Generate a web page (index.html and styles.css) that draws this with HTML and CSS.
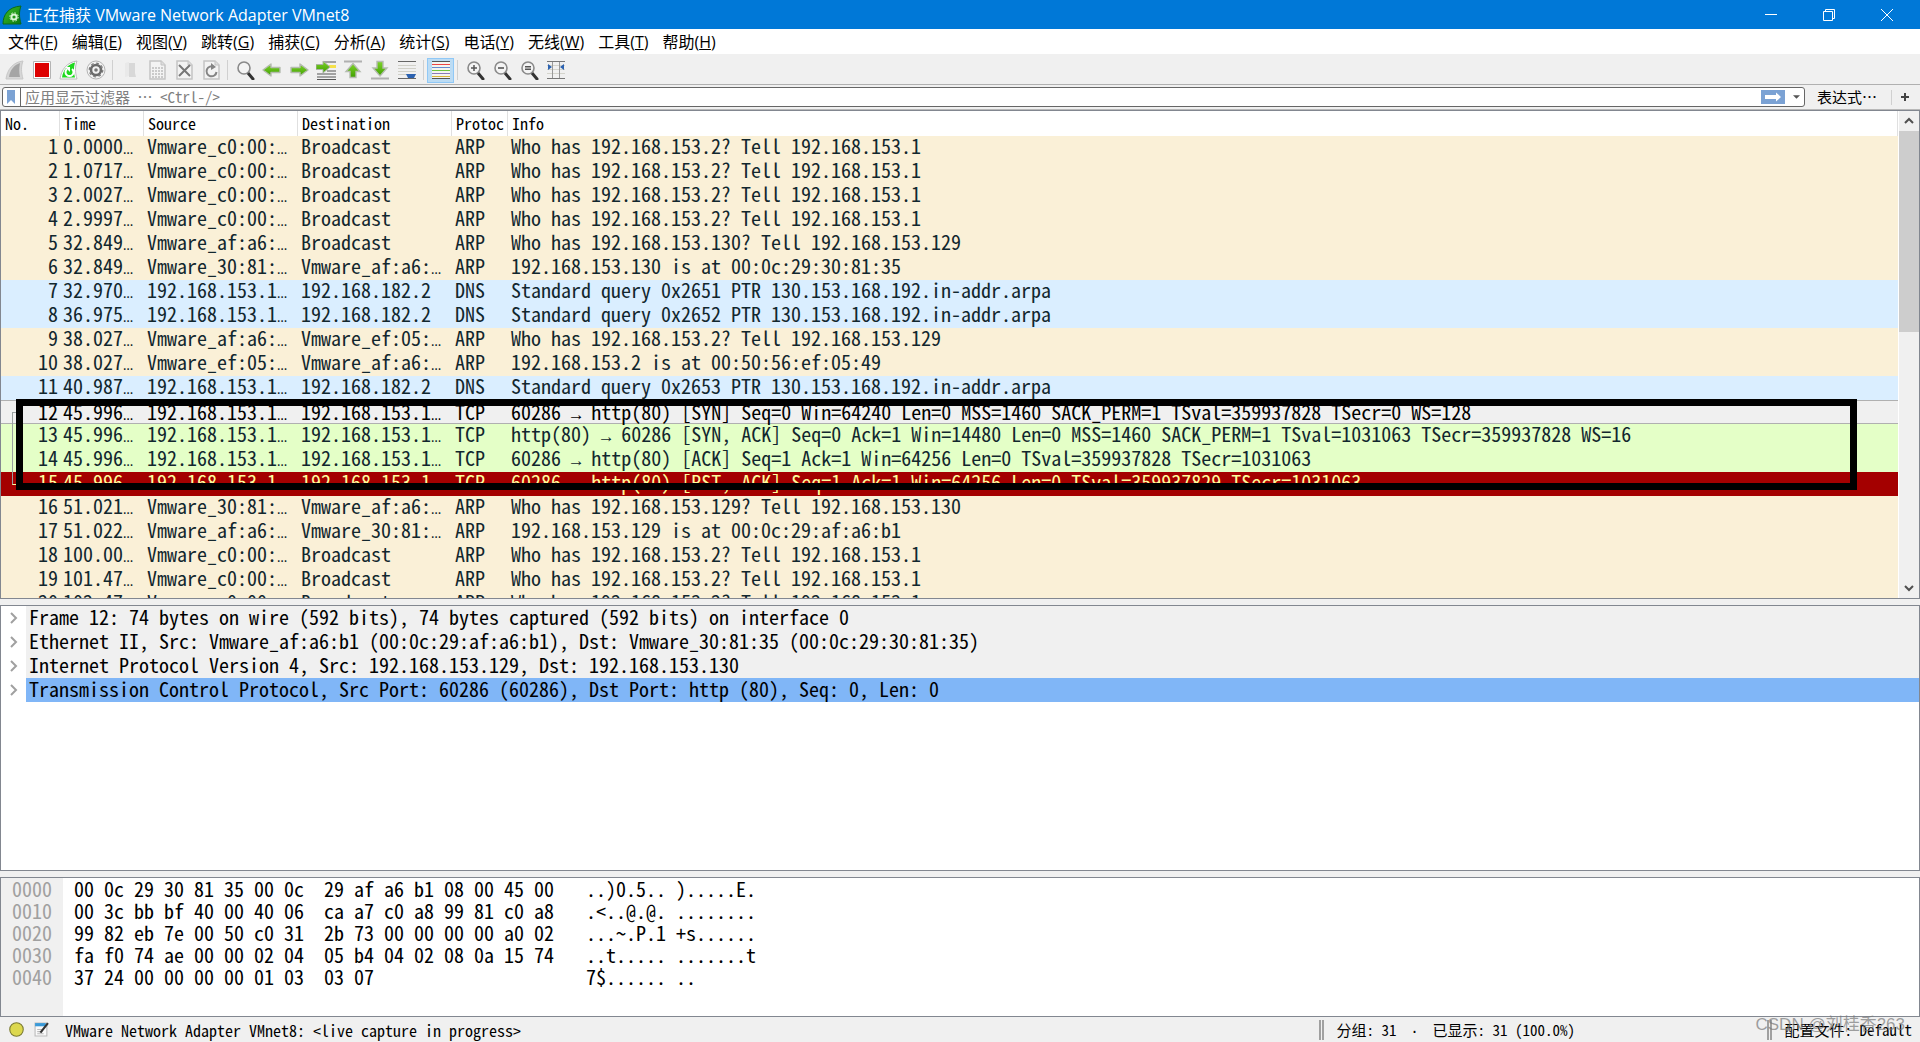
FILE: index.html
```html
<!DOCTYPE html>
<html lang="zh-CN">
<head>
<meta charset="utf-8">
<title>正在捕获 VMware Network Adapter VMnet8</title>
<link rel="stylesheet" href="styles.css">
</head>
<body>
<svg class="defs" aria-hidden="true">
  <defs>
    <linearGradient id="green" x1="0" y1="0" x2="0" y2="1"><stop offset="0" stop-color="#7fd42a"/><stop offset="1" stop-color="#3f9f00"/></linearGradient>
    <linearGradient id="fin" x1="0" y1="0" x2="1" y2="1"><stop offset="0" stop-color="#3fc02a"/><stop offset="1" stop-color="#0c7a10"/></linearGradient>
    <g id="lens"><path d="M13 13l5 6" stroke="#333" stroke-width="3" stroke-linecap="round"/><circle cx="9" cy="8" r="6" fill="#f4f4f4" stroke="#8a8a8a" stroke-width="1.6"/></g>
    <g id="page"><path d="M3 1h11l4 4v14H3z" fill="#f3f3f3" stroke="#c4c4c4" stroke-width="1.5"/><path d="M14 1v4h4" fill="#ddd" stroke="#c4c4c4"/></g>
    <path id="arrow" d="M1 10l8-6v3.500h9v5H9V16z" fill="url(#green)" stroke="#b5bcb0" stroke-width="1.400" stroke-linejoin="round"/>
  </defs>
</svg>

<header class="titlebar">
  <svg class="logo" viewBox="0 0 20 20"><path d="M1 19C1 10 6 2 19 1C17 6 17 12 19 19z" fill="url(#fin)" stroke="#0a6a1a"/><circle cx="12" cy="12" r="2.600" fill="none" stroke="#d8f5d4" stroke-width="2"/><circle cx="12" cy="12" r="4.200" fill="none" stroke="#d8f5d4" stroke-width="1" stroke-dasharray="1.600 1.700"/></svg>
  <h1>正在捕获 VMware Network Adapter VMnet8</h1>
  <div class="window-buttons">
    <button aria-label="最小化"><svg viewBox="0 0 12 12"><path d="M0 5.500h12"/></svg></button>
    <button aria-label="还原"><svg viewBox="0 0 12 12"><path d="M.5 2.500h9v9h-9zM2.500 2.500v-2h9v9h-2"/></svg></button>
    <button aria-label="关闭"><svg viewBox="0 0 12 12"><path d="M0 0l12 12M12 0L0 12"/></svg></button>
  </div>
</header>

<nav class="menubar">
  <button>文件(<u>F</u>)</button><button>编辑(<u>E</u>)</button><button>视图(<u>V</u>)</button><button>跳转(<u>G</u>)</button><button>捕获(<u>C</u>)</button><button>分析(<u>A</u>)</button><button>统计(<u>S</u>)</button><button>电话(<u>Y</u>)</button><button>无线(<u>W</u>)</button><button>工具(<u>T</u>)</button><button>帮助(<u>H</u>)</button>
</nav>

<div class="toolbar" role="toolbar">
  <button aria-label="开始捕获"><svg viewBox="0 0 20 20"><path d="M1 19C2 10 8 2 18 1C16 6 16 12 18 19z" fill="#d6d6d6" stroke="#c8c8c8"/><path d="M4 17C5 10 9 5 15 3C14 8 14 13 15 17z" fill="#a5a5a5"/></svg></button>
  <button aria-label="停止捕获"><svg viewBox="0 0 20 20"><path d="M1.500 1.500h17v17h-17z" fill="#fff" stroke="#b4b4b4"/><path d="M3 3h14v14H3z" fill="#d00"/></svg></button>
  <button aria-label="重新捕获"><svg viewBox="0 0 20 20"><path d="M1 19C2 10 8 2 18 1C16 6 16 12 18 19z" fill="#fff" stroke="#bbb"/><path d="M3 17.500C4 10 9 4 16 2.500C14.500 8 14.500 13 16 17.500z" fill="#1fd81f"/><path d="M8 9a4 4 0 1 0 5 0" fill="none" stroke="#fff" stroke-width="2"/><path d="M6 7h5v5z" fill="#fff"/></svg></button>
  <button aria-label="捕获选项"><svg viewBox="0 0 20 20"><circle cx="10" cy="10" r="9" fill="#f3f3f3" stroke="#b4b4b4"/><circle cx="10" cy="10" r="5" fill="none" stroke="#6c6c6c" stroke-width="2.600"/><circle cx="10" cy="10" r="6.800" fill="none" stroke="#777" stroke-width="1.200" stroke-dasharray="2.700 2.640"/><circle cx="10" cy="10" r="1.800" fill="#777"/></svg></button>
  <span class="sep"></span>
  <button aria-label="打开"><svg viewBox="0 0 20 20"><path d="M5 3l4-1v14l-4 1z" fill="#e9e9e9"/><path d="M9 3h6v10l1 4H9z" fill="#d8d8d8"/></svg></button>
  <button aria-label="保存"><svg viewBox="0 0 20 20"><use href="#page"/><path d="M5 8h11M5 11h11M5 14h11M5 17h11" stroke="#cacaca" stroke-width="2" stroke-dasharray="2 1"/></svg></button>
  <button aria-label="关闭文件"><svg viewBox="0 0 20 20"><use href="#page"/><path d="M5 5l11 11M16 5L5 16" stroke="#777" stroke-width="2"/></svg></button>
  <button aria-label="重新加载"><svg viewBox="0 0 20 20"><use href="#page"/><path d="M13 7a5 5 0 1 0 2.500 5" fill="none" stroke="#848484" stroke-width="2"/><path d="M10 3l5 4-5 3z" fill="#848484"/></svg></button>
  <span class="sep"></span>
  <button aria-label="查找"><svg viewBox="0 0 20 20"><use href="#lens"/></svg></button>
  <button aria-label="后退"><svg viewBox="0 0 20 20"><use href="#arrow"/></svg></button>
  <button aria-label="前进"><svg viewBox="0 0 20 20"><use href="#arrow" transform="matrix(-1 0 0 1 20 0)"/></svg></button>
  <button aria-label="转到分组"><svg viewBox="0 0 20 20"><path d="M8 2h12M1 14h19M1 17h19M1 19.500h19M11 11h9" stroke="#555" stroke-width="1.200"/><path d="M13 5h7v3h-7z" fill="#f5e04a"/><path d="M0 4.500h7V1l7 6-7 6V9.500H0z" fill="url(#green)" stroke="#aab4a4"/></svg></button>
  <button aria-label="首个分组"><svg viewBox="0 0 20 20"><path d="M1 1.500h18" stroke="#b0b0b0" stroke-width="2"/><path d="M10 3.500l7 8h-4v6H7v-6H3z" fill="url(#green)" stroke="#b5bcb0" stroke-width="1.400"/></svg></button>
  <button aria-label="最新分组"><svg viewBox="0 0 20 20"><path d="M1 18.500h18" stroke="#b0b0b0" stroke-width="2"/><path d="M10 16l7-8h-4V1.500H7V8H3z" fill="url(#green)" stroke="#b5bcb0" stroke-width="1.400"/></svg></button>
  <button aria-label="自动滚动"><svg viewBox="0 0 20 20"><path d="M1 1.500h18M1 18.500h18" stroke="#666"/><path d="M1 5.500h18M1 8.500h18M1 11.500h18M1 14.500h18" stroke="#d0d0c8"/><path d="M9 14h10l-2 4h-6z" fill="#2c62b0"/></svg></button>
  <span class="sep"></span>
  <button class="on" aria-label="着色"><svg viewBox="0 0 20 20"><path d="M1 1h18v18H1z" fill="#f4f4f0"/><path d="M1 1.500h18M1 18.500h18" stroke="#555"/><path d="M1 4.500h18" stroke="#e44"/><path d="M1 7.500h18" stroke="#668ad0"/><path d="M1 10.500h18" stroke="#6fc440"/><path d="M1 13.500h18" stroke="#8a7ab8"/><path d="M1 16.500h18" stroke="#d8b438"/></svg></button>
  <span class="sep"></span>
  <button aria-label="放大"><svg viewBox="0 0 20 20"><use href="#lens"/><path d="M6 8h6M9 5v6" stroke="#555" stroke-width="1.500"/></svg></button>
  <button aria-label="缩小"><svg viewBox="0 0 20 20"><use href="#lens"/><path d="M6 8h6" stroke="#555" stroke-width="1.600"/></svg></button>
  <button aria-label="正常大小"><svg viewBox="0 0 20 20"><use href="#lens"/><path d="M6 6.800h6M6 9.200h6" stroke="#555" stroke-width="1.400"/></svg></button>
  <button aria-label="调整列宽"><svg viewBox="0 0 20 20"><path d="M1 1.500h18M1 18.500h18" stroke="#777"/><path d="M1 5.500h18M1 9.500h18M1 13.500h18" stroke="#d4d4cc"/><path d="M6.500 2v16M13.500 2v16" stroke="#999"/><path d="M2 4l4 3-4 3zM18 4l-4 3 4 3z" fill="#2c62b0"/></svg></button>
</div>

<form class="filterbar">
  <div class="filter">
    <button type="button" class="mark" aria-label="书签"><svg viewBox="0 0 8 14"><path d="M0 0h8v14l-4-4-4 4z" fill="#7ba2d4"/></svg></button>
    <input type="text" aria-label="显示过滤器" placeholder="应用显示过滤器 … &lt;Ctrl-/&gt;">
    <button type="button" class="apply" aria-label="应用"><svg viewBox="0 0 24 14"><path d="M0 0h24v14H0z" fill="#7ba2d4"/><path d="M4 5h11V2.500l5 4.500-5 4.500V9H4z" fill="#fff"/></svg></button>
    <button type="button" class="drop" aria-label="历史"><svg viewBox="0 0 8 4"><path d="M0 0h8L4 4z" fill="#555"/></svg></button>
  </div>
  <button type="button" class="expr">表达式…</button>
  <span class="sep"></span>
  <button type="button" class="plus" aria-label="添加"><svg viewBox="0 0 8 8"><path d="M4 0v8M0 4h8" stroke="#444" stroke-width="2"/></svg></button>
</form>

<main class="panes">
  <section class="pane list">
    <div class="rows">
      <table>
        <colgroup><col class="c-no"><col class="c-time"><col class="c-addr"><col class="c-addr"><col class="c-proto"><col></colgroup>
        <thead><tr><th>No.</th><th>Time</th><th>Source</th><th>Destination</th><th>Protoc</th><th>Info</th></tr></thead>
        <tbody>
          <tr class="arp"><td>1</td><td class="cut">0.0000</td><td class="cut">Vmware_c0:00:</td><td>Broadcast</td><td>ARP</td><td>Who has 192.168.153.2? Tell 192.168.153.1</td></tr>
          <tr class="arp"><td>2</td><td class="cut">1.0717</td><td class="cut">Vmware_c0:00:</td><td>Broadcast</td><td>ARP</td><td>Who has 192.168.153.2? Tell 192.168.153.1</td></tr>
          <tr class="arp"><td>3</td><td class="cut">2.0027</td><td class="cut">Vmware_c0:00:</td><td>Broadcast</td><td>ARP</td><td>Who has 192.168.153.2? Tell 192.168.153.1</td></tr>
          <tr class="arp"><td>4</td><td class="cut">2.9997</td><td class="cut">Vmware_c0:00:</td><td>Broadcast</td><td>ARP</td><td>Who has 192.168.153.2? Tell 192.168.153.1</td></tr>
          <tr class="arp"><td>5</td><td class="cut">32.849</td><td class="cut">Vmware_af:a6:</td><td>Broadcast</td><td>ARP</td><td>Who has 192.168.153.130? Tell 192.168.153.129</td></tr>
          <tr class="arp"><td>6</td><td class="cut">32.849</td><td class="cut">Vmware_30:81:</td><td class="cut">Vmware_af:a6:</td><td>ARP</td><td>192.168.153.130 is at 00:0c:29:30:81:35</td></tr>
          <tr class="dns"><td>7</td><td class="cut">32.970</td><td class="cut">192.168.153.1</td><td>192.168.182.2</td><td>DNS</td><td>Standard query 0x2651 PTR 130.153.168.192.in-addr.arpa</td></tr>
          <tr class="dns"><td>8</td><td class="cut">36.975</td><td class="cut">192.168.153.1</td><td>192.168.182.2</td><td>DNS</td><td>Standard query 0x2652 PTR 130.153.168.192.in-addr.arpa</td></tr>
          <tr class="arp"><td>9</td><td class="cut">38.027</td><td class="cut">Vmware_af:a6:</td><td class="cut">Vmware_ef:05:</td><td>ARP</td><td>Who has 192.168.153.2? Tell 192.168.153.129</td></tr>
          <tr class="arp"><td>10</td><td class="cut">38.027</td><td class="cut">Vmware_ef:05:</td><td class="cut">Vmware_af:a6:</td><td>ARP</td><td>192.168.153.2 is at 00:50:56:ef:05:49</td></tr>
          <tr class="dns"><td>11</td><td class="cut">40.987</td><td class="cut">192.168.153.1</td><td>192.168.182.2</td><td>DNS</td><td>Standard query 0x2653 PTR 130.153.168.192.in-addr.arpa</td></tr>
          <tr class="selected"><td>12</td><td class="cut">45.996</td><td class="cut">192.168.153.1</td><td class="cut">192.168.153.1</td><td>TCP</td><td>60286 <span class="sym">→</span> http(80) [SYN] Seq=0 Win=64240 Len=0 MSS=1460 SACK_PERM=1 TSval=359937828 TSecr=0 WS=128</td></tr>
          <tr class="http"><td>13</td><td class="cut">45.996</td><td class="cut">192.168.153.1</td><td class="cut">192.168.153.1</td><td>TCP</td><td>http(80) <span class="sym">→</span> 60286 [SYN, ACK] Seq=0 Ack=1 Win=14480 Len=0 MSS=1460 SACK_PERM=1 TSval=1031063 TSecr=359937828 WS=16</td></tr>
          <tr class="http"><td>14</td><td class="cut">45.996</td><td class="cut">192.168.153.1</td><td class="cut">192.168.153.1</td><td>TCP</td><td>60286 <span class="sym">→</span> http(80) [ACK] Seq=1 Ack=1 Win=64256 Len=0 TSval=359937828 TSecr=1031063</td></tr>
          <tr class="rst"><td>15</td><td class="cut">45.996</td><td class="cut">192.168.153.1</td><td class="cut">192.168.153.1</td><td>TCP</td><td>60286 <span class="sym">→</span> http(80) [RST, ACK] Seq=1 Ack=1 Win=64256 Len=0 TSval=359937829 TSecr=1031063</td></tr>
          <tr class="arp"><td>16</td><td class="cut">51.021</td><td class="cut">Vmware_30:81:</td><td class="cut">Vmware_af:a6:</td><td>ARP</td><td>Who has 192.168.153.129? Tell 192.168.153.130</td></tr>
          <tr class="arp"><td>17</td><td class="cut">51.022</td><td class="cut">Vmware_af:a6:</td><td class="cut">Vmware_30:81:</td><td>ARP</td><td>192.168.153.129 is at 00:0c:29:af:a6:b1</td></tr>
          <tr class="arp"><td>18</td><td class="cut">100.00</td><td class="cut">Vmware_c0:00:</td><td>Broadcast</td><td>ARP</td><td>Who has 192.168.153.2? Tell 192.168.153.1</td></tr>
          <tr class="arp"><td>19</td><td class="cut">101.47</td><td class="cut">Vmware_c0:00:</td><td>Broadcast</td><td>ARP</td><td>Who has 192.168.153.2? Tell 192.168.153.1</td></tr>
          <tr class="arp"><td>20</td><td class="cut">102.47</td><td class="cut">Vmware_c0:00:</td><td>Broadcast</td><td>ARP</td><td>Who has 192.168.153.2? Tell 192.168.153.1</td></tr>
        </tbody>
      </table>
    </div>
    <div class="scrollbar">
      <button aria-label="向上"><svg viewBox="0 0 10 8"><path d="M1 6l4-4 4 4"/></svg></button>
      <div class="track"><div class="thumb"></div></div>
      <button aria-label="向下"><svg viewBox="0 0 10 8"><path d="M1 2l4 4 4-4"/></svg></button>
    </div>
    <div class="bracket"></div>
    <div class="highlight"></div>
  </section>

  <section class="pane details">
    <ul>
      <li><svg viewBox="0 0 8 12"><path d="M1 1l5 5-5 5"/></svg><span>Frame 12: 74 bytes on wire (592 bits), 74 bytes captured (592 bits) on interface 0</span></li>
      <li><svg viewBox="0 0 8 12"><path d="M1 1l5 5-5 5"/></svg><span>Ethernet II, Src: Vmware_af:a6:b1 (00:0c:29:af:a6:b1), Dst: Vmware_30:81:35 (00:0c:29:30:81:35)</span></li>
      <li><svg viewBox="0 0 8 12"><path d="M1 1l5 5-5 5"/></svg><span>Internet Protocol Version 4, Src: 192.168.153.129, Dst: 192.168.153.130</span></li>
      <li class="active"><svg viewBox="0 0 8 12"><path d="M1 1l5 5-5 5"/></svg><span>Transmission Control Protocol, Src Port: 60286 (60286), Dst Port: http (80), Seq: 0, Len: 0</span></li>
    </ul>
  </section>

  <section class="pane hex">
<pre class="offsets">0000
0010
0020
0030
0040</pre>
<pre class="bytes">00 0c 29 30 81 35 00 0c  29 af a6 b1 08 00 45 00
00 3c bb bf 40 00 40 06  ca a7 c0 a8 99 81 c0 a8
99 82 eb 7e 00 50 c0 31  2b 73 00 00 00 00 a0 02
fa f0 74 ae 00 00 02 04  05 b4 04 02 08 0a 15 74
37 24 00 00 00 00 01 03  03 07</pre>
<pre class="ascii">..)0.5.. ).....E.
.&lt;..@.@. ........
...~.P.1 +s......
..t..... .......t
7$...... ..</pre>
  </section>
</main>

<footer class="status">
  <svg class="led" viewBox="0 0 14 14"><circle cx="7" cy="7" r="6.300" fill="#dcd84e" stroke="#7a7a30"/></svg>
  <svg class="note" viewBox="0 0 14 14"><path d="M1 1h11v12H1z" fill="#fafafa" stroke="#bbb"/><path d="M1 1h10v3H1z" fill="#3a9ad8"/><path d="M3 7h6M3 9h5M3 11h6" stroke="#bbb"/><path d="M13 1L6 10" stroke="#333" stroke-width="2"/></svg>
  <span class="source">VMware Network Adapter VMnet8: &lt;live capture in progress&gt;</span>
  <span class="counts">分组: 31 <span class="dot">·</span> 已显示: 31 (100.0%)</span>
  <span class="profile">配置文件: Default</span>
  <span class="watermark">CSDN @刘桂香263</span>
</footer>
</body>
</html>
```
FILE: styles.css
```css
* { box-sizing: border-box; }
html, body { height: 100%; }
body {
  margin: 0;
  display: flex;
  flex-direction: column;
  overflow: hidden;
  background: #f0f0f0;
  color: #000;
  font: 16px/20px "Noto Sans Mono CJK SC", "Liberation Mono", "Noto Sans CJK SC", monospace;
}
button { margin: 0; padding: 0; border: 0; background: none; color: inherit; font: inherit; }
svg { display: block; fill: none; }
.defs { position: absolute; width: 0; height: 0; }

.titlebar {
  flex: none;
  display: flex;
  align-items: center;
  height: 29px;
  padding: 0 4px 0 2px;
  background: #0078d7;
  color: #fff;
}
.logo { width: 20px; height: 20px; margin-right: 5px; }
.titlebar h1 { flex: 1; margin: 0; font: 16px/28px "Open Sans", "Noto Sans CJK SC", sans-serif; }
.window-buttons { display: flex; }
.window-buttons button { width: 58px; height: 28px; display: grid; place-items: center; }
.window-buttons svg { width: 12px; height: 12px; stroke: #fff; }

.menubar {
  flex: none;
  display: flex;
  gap: 14px;
  height: 27px;
  padding-left: 8px;
  background: #fff;
  border-bottom: 2px solid #f0f0f0;
  font: 16px/26px "Open Sans", "Noto Sans CJK SC", sans-serif;
}

.toolbar {
  flex: none;
  display: flex;
  align-items: center;
  height: 29px;
  padding: 0 1px;
  border-bottom: 1px solid #b0b0b0;
}
.toolbar button { width: 27px; height: 25px; display: grid; place-items: center; }
.toolbar button.on { background: #bcdcf4; border: 1px solid #90c8f6; }
.toolbar svg { width: 20px; height: 20px; }
.sep { width: 1px; height: 20px; margin: 0 3px; background: #d0d0d0; }

.filterbar {
  flex: none;
  display: flex;
  align-items: center;
  height: 25px;
  margin: 0;
  padding: 2px 11px 2px 2px;
  border-bottom: 1px solid #b8b8b8;
}
.filter {
  flex: 1;
  display: flex;
  align-items: center;
  height: 20px;
  border: 1px solid #666;
  border-radius: 3px;
  background: #fff;
}
.mark { height: 18px; padding: 0 5px 0 4px; border-right: 1px solid #666; }
.mark svg { width: 8px; height: 14px; }
.filter input {
  flex: 1;
  min-width: 0;
  height: 18px;
  padding: 0 4px;
  border: 0;
  outline: 0;
  background: none;
  font: 15px/18px "Noto Sans Mono CJK SC", "Noto Sans CJK SC", monospace;
}
.filter input::placeholder { color: #808080; opacity: 1; }
.apply svg { width: 24px; height: 14px; }
.drop { padding: 0 4px 0 8px; }
.drop svg { width: 7px; height: 4px; }
.expr { padding: 0 11px 0 12px; font-size: 15px; }
.filterbar .sep { height: 15px; margin: 0 9px 0 3px; }
.plus svg { width: 8px; height: 8px; }

.panes { flex: 1; min-height: 0; display: flex; flex-direction: column; gap: 6px; }
.pane {
  position: relative;
  display: flex;
  min-height: 0;
  overflow: hidden;
  border: 1px solid #828790;
  background: #fff;
  font-size: 20px;
}
.list { flex: 490 1 0; }
.details { flex: 266 1 0; }
.hex { flex: 139 1 0; }

.rows { flex: 1; min-width: 0; overflow: hidden; }
table { width: 100%; table-layout: fixed; border-collapse: separate; border-spacing: 0; }
.c-no { width: 59px; }
.c-time { width: 84px; }
.c-addr { width: 154px; }
.c-proto { width: 56px; }
th {
  height: 25px;
  padding: 0 4px 2px;
  border-right: 1px solid #e0e0e0;
  text-align: left;
  white-space: nowrap;
  font: 16px/22px "Noto Sans Mono CJK SC", "Liberation Mono", monospace;
}
td {
  height: 24px;
  padding: 0 0 4px 3px;
  white-space: nowrap;
  line-height: 20px;
  color: #12272e;
}
td:first-child { padding-left: 0; padding-right: 2px; text-align: right; }
.cut::after { content: "…"; }
.cut::after, .sym { font-family: "Liberation Mono", monospace; font-size: 17px; line-height: 0; }
.arp td { background: #faf0d7; }
.dns td { background: #daeeff; }
.http td { background: #e4ffc7; }
.rst td { background: #a40000; color: #fffc9c; }
.selected td { padding-bottom: 0; background: #f0f0f0; color: #000; border: solid #b0b0b0; border-width: 1px 0; }

.scrollbar { flex: none; width: 21px; display: flex; flex-direction: column; border-left: 1px solid #fff; background: #f0f0f0; }
.scrollbar button { height: 20px; display: grid; place-items: center; }
.scrollbar svg { width: 10px; height: 8px; stroke: #505050; stroke-width: 2; }
.track { flex: 1; }
.thumb { height: 45%; background: #cdcdcd; }

/* conversation bracket and marker frame lie over the rows */
.bracket { position: absolute; left: 11px; top: 301px; width: 8px; height: 73px; border: solid #9aa0a0; border-width: 1px 0 1px 1px; border-bottom-color: #fffc9c; }
.highlight { position: absolute; left: 15px; right: 62px; top: 288px; height: 91px; border: 7px solid #000; }

.details ul { flex: 1; margin: 0; padding: 0; list-style: none; }
.details li { display: flex; align-items: center; height: 24px; line-height: 22px; }
.details svg { width: 8px; height: 12px; margin: 0 8px 0 9px; stroke: #a0a0a0; stroke-width: 2; }
.details span { flex: 1; padding: 0 0 2px 3px; background: #f0f0f0; white-space: nowrap; }
.details .active span { background: #80b6f7; }

.hex pre { margin: 0; font-family: inherit; line-height: 22px; }
.hex .offsets { padding-left: 11px; width: 62px; background: #f0f0f0; color: #a0a0a0; }
.hex .bytes { width: 523px; padding-left: 11px; }

.status { position: relative; flex: none; display: flex; align-items: center; height: 25px; padding: 0 8px 0 9px; }
.led { width: 15px; height: 15px; }
.note { width: 15px; height: 15px; margin: 0 16px 0 10px; }
.source { flex: 1; }
.counts, .profile { border-left: 5px double #a0a0a0; padding-left: 12px; font-size: 15px; }
.counts { width: 448px; }
.dot { margin: 0 6px; font-family: "Liberation Mono", monospace; line-height: 0; }
.watermark {
  position: absolute;
  right: 15px;
  bottom: 5px;
  color: rgba(120, 120, 120, .7);
  font: 17px/24px "Liberation Sans", "Noto Sans CJK SC", sans-serif;
}
```
